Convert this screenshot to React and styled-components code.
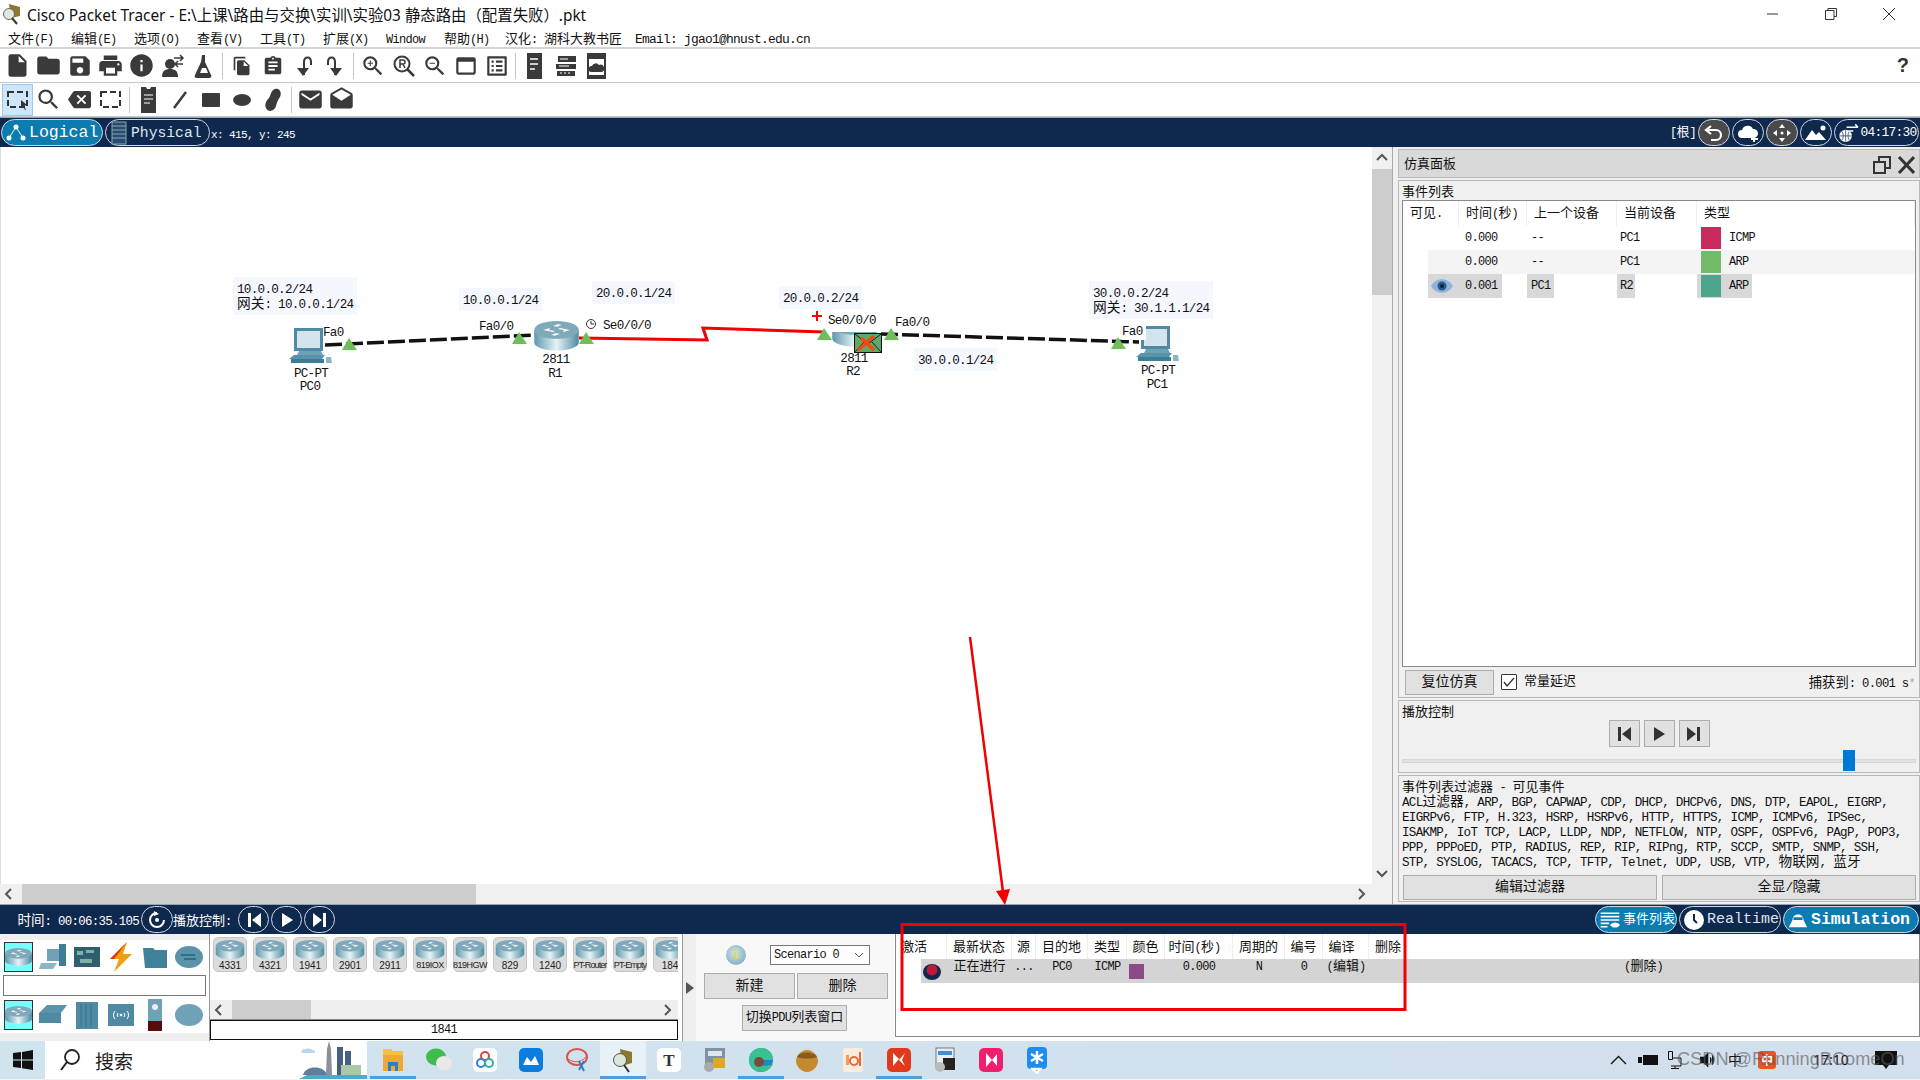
import styled, { createGlobalStyle } from 'styled-components';
import {
  MdInsertDriveFile,
  MdFolder,
  MdSave,
  MdPrint,
  MdInfo,
  MdZoomIn,
  MdZoomOut,
  MdSearch,
  MdBackspace,
  MdEmail,
  MdDrafts,
  MdFileCopy,
  MdAssignment,
  MdWebAsset,
  MdListAlt,
} from 'react-icons/md';

const GlobalStyle = createGlobalStyle`
  html, body { margin: 0; padding: 0; background: #fff; }
  * { box-sizing: border-box; }
`;

const MonoSpan = styled.span`
  font-family: 'Liberation Mono', 'Noto Sans CJK SC', monospace;
  font-size: ${p => p.$s * 0.92}px;
  letter-spacing: ${p => p.$s * -0.052}px;
  white-space: pre;
`;

const Han = styled.span`
  font-family: 'Noto Sans CJK SC', sans-serif;
  font-size: ${p => p.$s}px;
  letter-spacing: 0;
  line-height: 0;
`;

// SimSun look: half width latin next to full width han
function Txt({ s = 13, children }) {
  const parts = String(children).split(/([\u3000-\u9fff\uff00-\uffef]+)/);
  return (
    <MonoSpan $s={s}>
      {parts.map((part, i) =>
        i % 2 ? (
          <Han key={i} $s={s}>
            {part}
          </Han>
        ) : (
          part
        )
      )}
    </MonoSpan>
  );
}

const Page = styled.div`
  position: relative;
  width: 1920px;
  height: 1080px;
  overflow: hidden;
  display: flex;
  flex-direction: column;
  background: #f0f0f0;
  color: #111;
`;

const TitleBar = styled.div`
  height: 28px;
  background: #fff;
  display: flex;
  align-items: center;
  padding: 0 4px 0 2px;
  font-family: 'Noto Sans', 'Noto Sans CJK SC', sans-serif;
  font-size: 15.400px;
  gap: 3px;
`;

const TitleText = styled.span`
  flex: 1;
  white-space: pre;
  margin-left: 2px;
`;

const WinButton = styled.div`
  width: 55px;
  height: 28px;
  display: flex;
  align-items: center;
  justify-content: center;
`;

const MenuBar = styled.div`
  height: 19px;
  background: #fff;
  display: flex;
  align-items: center;
  padding-left: 8px;
`;

const MenuItem = styled.div`
  width: ${p => p.$w || 63}px;
  flex-shrink: 0;
  white-space: nowrap;
`;

const Toolbar = styled.div`
  height: ${p => p.$h}px;
  background: #fff;
  border-top: ${p => (p.$top ? '2px solid #d4d4d4' : 'none')};
  border-bottom: 1px solid #c8c8c8;
  display: flex;
  align-items: center;
  padding-left: 2px;
  color: #3a3a3a;
`;

const ToolSlot = styled.div`
  width: 31px;
  height: 32px;
  flex-shrink: 0;
  display: flex;
  align-items: center;
  justify-content: center;
  background: ${p => (p.$on ? '#cfe6f8' : 'transparent')};
  border: ${p => (p.$on ? '1px solid #99c8ee' : 'none')};
`;

const ToolSep = styled.div`
  width: 1px;
  height: 26px;
  background: #c4c4c4;
  margin: 0 3px;
  flex-shrink: 0;
`;

const HelpMark = styled.div`
  margin-left: auto;
  margin-right: 11px;
  font: bold 20px 'Liberation Sans', sans-serif;
  color: #333;
`;

const NavBar = styled.div`
  height: ${p => p.$h}px;
  background: #0f294e;
  color: #fff;
  display: flex;
  align-items: center;
  border-top: 1px solid #9aa3ad;
  padding: 0 1px;
  gap: 2px;
  flex-shrink: 0;
`;

const Pill = styled.div`
  height: 27px;
  width: ${p => p.$w}px;
  flex-shrink: 0;
  border: 1px solid #cfd8e6;
  border-radius: 14px;
  background: ${p => (p.$on ? '#0b7bb0' : '#0f294e')};
  display: flex;
  align-items: center;
  padding-left: 3px;
  gap: 2px;
  color: ${p => (p.$dim ? '#dfe6ef' : '#fff')};
  font-family: 'Liberation Mono', monospace;
  font-size: ${p => p.$fs || 15}px;
  font-weight: ${p => (p.$b ? 700 : 400)};
`;

const CircleBtn = styled.div`
  width: ${p => p.$w || 32}px;
  height: 27px;
  flex-shrink: 0;
  border: 1px solid #cfd8e6;
  border-radius: 14px;
  background: ${p => (p.$on ? '#4a4a4a' : '#0f294e')};
  display: flex;
  align-items: center;
  justify-content: center;
  gap: 1px;
  color: #fff;
`;

const Coords = styled.div`
  margin-left: -1px;
  color: #fff;
`;

const TimeLabel = styled.div`
  margin-left: 3px;
`;

const PlayLabel = styled.div`
  margin: 0 5px 0 -2px;
`;

const Spacer = styled.div`
  flex: 1;
`;

const Main = styled.div`
  height: 757px;
  display: flex;
  flex-shrink: 0;
`;

const CanvasColumn = styled.div`
  width: 1393px;
  display: flex;
  border-right: 1px solid #aaa;
  flex-shrink: 0;
`;

const CanvasWrap = styled.div`
  flex: 1;
  display: flex;
  flex-direction: column;
`;

const Canvas = styled.div`
  position: relative;
  flex: 1;
  background: #fff;
  overflow: hidden;
  border-left: 1px solid #ddd;
`;

const LinkLayer = styled.svg`
  position: absolute;
  left: 0;
  top: 0;
`;

const Note = styled.div`
  position: absolute;
  left: ${p => p.$x}px;
  top: ${p => p.$y - 148}px;
  padding: 6px 4px 2px;
  background: #f5f7ff;
  font: 12.600px/15px 'Liberation Mono', monospace;
  white-space: pre;
  color: #111;
`;

const PortLabel = styled.div`
  position: absolute;
  left: ${p => p.$x}px;
  top: ${p => p.$y - 148 - 8}px;
  line-height: 16px;
  background: ${p => (p.$bg ? '#fff' : 'transparent')};
  padding-right: ${p => (p.$bg ? 3 : 0)}px;
`;

const NodeCaption = styled.div`
  position: absolute;
  left: ${p => p.$x - 40}px;
  top: ${p => p.$y - 148 - 7}px;
  width: 80px;
  text-align: center;
  line-height: 14px;
`;

const NodeIcon = styled.div`
  position: absolute;
  left: ${p => p.$x}px;
  top: ${p => p.$y - 148}px;
  line-height: 0;
  clip-path: ${p => (p.$crop ? `inset(${p.$crop}px 0 0 0)` : 'none')};
`;

const HScroll = styled.div`
  height: 20px;
  background: #f0f0f0;
  display: flex;
  align-items: center;
  flex-shrink: 0;
`;

const ScrollArrow = styled.div`
  width: 20px;
  flex-shrink: 0;
  display: flex;
  justify-content: center;
  align-items: center;
  color: #555;
`;

const HTrack = styled.div`
  flex: 1;
  height: 100%;
`;

const HThumb = styled.div`
  margin-left: 2px;
  width: 454px;
  height: 100%;
  background: #cdcdcd;
`;

const VScroll = styled.div`
  width: 20px;
  background: #f0f0f0;
  display: flex;
  flex-direction: column;
  flex-shrink: 0;
  padding-bottom: 20px;
`;

const VArrow = styled.div`
  height: 22px;
  display: flex;
  align-items: center;
  justify-content: center;
`;

const VTrack = styled.div`
  flex: 1;
`;

const VThumb = styled.div`
  height: 126px;
  background: #cdcdcd;
`;

const SidePanel = styled.div`
  flex: 1;
  display: flex;
  flex-direction: column;
  padding: 2px 0 1px 5px;
  gap: 2px;
`;

const PanelHeader = styled.div`
  height: 29px;
  background: #d9d9d9;
  border: 1px solid #bbb;
  display: flex;
  align-items: center;
  padding: 2px 4px 0 5px;
  flex-shrink: 0;
`;

const Section = styled.div`
  border: 1px solid #b8b8b8;
  padding: 3px;
  flex-shrink: 0;
  height: ${p => p.$h}px;
  display: flex;
  flex-direction: column;
  position: relative;
`;

const SectionTitle = styled.div`
  line-height: 14px;
  height: 15px;
  flex-shrink: 0;
  margin-bottom: ${p => p.$mb || 0}px;
`;

const EventBox = styled.div`
  height: 467px;
  background: #fff;
  border: 1px solid #8a8a8a;
  flex-shrink: 0;
`;

const EVENT_COLS = '56px 68px 90px 80px 1fr';

const EventHead = styled.div`
  display: grid;
  grid-template-columns: ${EVENT_COLS};
  height: 25px;
  align-items: center;
`;

const HeadCell = styled.div`
  height: 100%;
  display: flex;
  align-items: center;
  padding-left: 7px;
  border-right: 1px solid #efefef;
`;

const EventRow = styled.div`
  display: grid;
  grid-template-columns: 31px 68px 90px 80px 1fr;
  height: 24px;
  margin-left: 25px;
  align-items: center;
  background: ${p => (p.$alt ? '#f4f4f4' : 'transparent')};
`;

const EventCell = styled.div`
  height: 24px;
  display: flex;
  align-items: center;
  gap: 8px;
  padding-left: ${p => p.$pl || 3}px;
  padding-right: ${p => p.$pr || 0}px;
  width: ${p => (p.$full ? 'auto' : 'fit-content')};
  background: ${p => (p.$sel ? '#d8d8d8' : 'transparent')};
`;

const Swatch = styled.div`
  width: 20px;
  height: 22px;
  background: ${p => p.$c};
`;

const EventControls = styled.div`
  height: 24px;
  margin-top: 3px;
  margin-left: 3px;
  display: flex;
  align-items: center;
  gap: 7px;
`;

const GreyButton = styled.div`
  width: ${p => (p.$w ? `${p.$w}px` : 'auto')};
  height: ${p => p.$h || 25}px;
  flex: ${p => (p.$w ? '0 0 auto' : 1)};
  background: #e1e1e1;
  border: 1px solid #adadad;
  display: flex;
  align-items: center;
  justify-content: center;
  color: #111;
`;

const CheckBox = styled.div`
  width: 16px;
  height: 16px;
  border: 1px solid #333;
  background: #fff;
  display: flex;
  align-items: center;
  justify-content: center;
  border-radius: 1px;
`;

const CaptureText = styled.div`
  margin-left: auto;
  margin-right: 1px;
`;

const Faint = styled.span`
  color: #aaa;
`;

const PlayRow = styled.div`
  display: flex;
  justify-content: center;
  gap: 4px;
  margin-top: 1px;
`;

const PlayBtn = styled(GreyButton)`
  width: 31px;
  height: 27px;
  flex: 0 0 auto;
`;

const Slider = styled.div`
  position: relative;
  height: 4px;
  background: #e0e4e0;
  border: 1px solid #d6d6d6;
  margin-top: 12px;
`;

const SliderThumb = styled.div`
  position: absolute;
  left: 440px;
  top: -10px;
  width: 12px;
  height: 21px;
  background: #0078d7;
`;

const FilterLine = styled.div`
  font: 12.600px/15px 'Liberation Mono', monospace;
  height: 15px;
  white-space: pre;
`;

const FilterButtons = styled.div`
  display: flex;
  gap: 5px;
  margin-top: 4px;
  padding: 0 0 0 1px;
`;

const BottomPanel = styled.div`
  height: 107px;
  display: flex;
  background: #fff;
  flex-shrink: 0;
`;

const DevicePicker = styled.div`
  width: 210px;
  display: flex;
  flex-direction: column;
  flex-shrink: 0;
  border-right: 1px solid #999;
`;

const GreyBand = styled.div`
  height: ${p => p.$h}px;
  background: #efefef;
  flex-shrink: 0;
`;

const IconRow = styled.div`
  height: 31px;
  padding: 0 4px;
  display: flex;
  gap: 5px;
  margin: ${p => p.$m || '0'};
  flex-shrink: 0;
`;

const PickIcon = styled.div`
  width: 29px;
  height: 30px;
  display: flex;
  align-items: center;
  justify-content: center;
  background: ${p => (p.$on ? '#7ff' : 'transparent')};
  border: ${p => (p.$on ? '1px solid #333' : 'none')};
`;

const PickerInput = styled.div`
  height: 24px;
  margin: 2px 3px;
  border: 1px solid #777;
  background: #fff;
`;

const DeviceColumn = styled.div`
  width: 468px;
  display: flex;
  flex-direction: column;
  flex-shrink: 0;
`;

const TileStrip = styled.div`
  height: 66px;
  display: flex;
  gap: 6px;
  padding: 3px 0 0 3px;
  overflow: hidden;
  flex-shrink: 0;
`;

const Tile = styled.div`
  width: 34px;
  height: 35px;
  flex-shrink: 0;
  background: #dcdcdc;
  border: 1px solid #c4c4c4;
  border-radius: 5px;
  display: flex;
  flex-direction: column;
  align-items: center;
  line-height: 11px;
  padding-top: 2px;
  white-space: nowrap;
`;

const TileLabel = styled.div`
  font-family: 'Liberation Sans Narrow', 'Liberation Sans', sans-serif;
  font-size: ${p => (p.$n > 5 ? 9 : 10)}px;
  color: #222;
  margin-top: 1px;
  letter-spacing: ${p => (p.$n > 7 ? -0.9 : p.$n > 5 ? -0.5 : 0)}px;
`;

const TileScroll = styled.div`
  height: 20px;
  background: #efefef;
  display: flex;
  align-items: center;
  justify-content: space-between;
  border-bottom: 1px solid #888;
  flex-shrink: 0;
`;

const TileThumb = styled.div`
  width: 79px;
  height: 100%;
  background: #cdcdcd;
  margin-left: 2px;
`;

const SelectedDevice = styled.div`
  height: 20px;
  border: 1.5px solid #111;
  background: #fff;
  display: flex;
  align-items: center;
  justify-content: center;
`;

const CollapseStrip = styled.div`
  width: 18px;
  flex-shrink: 0;
  display: flex;
  align-items: center;
  justify-content: flex-end;
  background: #fff;
`;

const CollapseInner = styled.div`
  width: 14px;
  height: 100%;
  background: #efefef;
  border-left: 1px solid #999;
  display: flex;
  align-items: center;
  justify-content: center;
`;

const ScenarioPanel = styled.div`
  width: 198px;
  flex-shrink: 0;
  display: flex;
  flex-direction: column;
  padding: 11px 6px 0 8px;
  background: #f8f8f8;
`;

const ScenarioTop = styled.div`
  display: flex;
  align-items: center;
  height: 20px;
  margin-bottom: 8px;
`;

const InfoDot = styled.div`
  width: 20px;
  height: 20px;
  margin-left: 22px;
  margin-right: 24px;
  border-radius: 50%;
  background: radial-gradient(circle at 45% 40%, #cfe4ec, #6f9fb3);
  display: flex;
  align-items: center;
  justify-content: center;
  font: bold 14px 'Liberation Serif', serif;
  color: #e8e020;
`;

const ScenarioSelect = styled.div`
  width: 100px;
  height: 20px;
  background: #fff;
  border: 1px solid #777;
  display: flex;
  align-items: center;
  justify-content: space-between;
  padding: 0 5px 0 3px;
`;

const ButtonRow = styled.div`
  display: flex;
  gap: 2px;
`;

const ToggleWrap = styled.div`
  display: flex;
  justify-content: flex-start;
  padding-left: 38px;
  margin-top: 6px;
`;

const PduTable = styled.div`
  flex: 1;
  margin: 0 0 4px 1px;
  border: 1px solid #888;
  border-top: none;
  background: #fff;
`;

const PDU_COLS = '51px 65px 24px 52px 39px 38px 68px 52px 38px 46px 39px 1fr';

const PduHead = styled.div`
  display: grid;
  grid-template-columns: ${PDU_COLS};
  height: 25px;
`;

const PduHeadCell = styled.div`
  border-right: 1px solid #efefef;
  display: flex;
  align-items: center;
  justify-content: ${p => (p.$left ? 'flex-start' : 'center')};
  padding-top: 3px;
  padding-left: ${p => (p.$left ? 5 : 0)}px;
  padding-right: ${p => (p.$shift ? 8 : 0)}px;
  white-space: nowrap;
`;

const PduRow = styled.div`
  display: grid;
  grid-template-columns: ${PDU_COLS};
  height: 24px;
  background: linear-gradient(to right, #fff 25px, #d4d4d4 25px);
`;

const PduCell = styled.div`
  display: flex;
  justify-content: ${p => (p.$start ? 'flex-start' : 'center')};
  align-items: flex-start;
  line-height: 16px;
  position: relative;
  white-space: nowrap;
  padding-right: ${p => p.$pr || 0}px;
`;

const PduDot = styled.div`
  width: 18px;
  height: 16px;
  border-radius: 50%;
  margin: 5px 0 0 27px;
  background: radial-gradient(circle at 50% 38%, #c0183a 0 38%, #14284a 42%);
`;

const PduSwatch = styled.div`
  width: 15px;
  height: 15px;
  margin: 5px 0 0 2px;
  background: #8c4a87;
`;

const Taskbar = styled.div`
  position: relative;
  height: 38px;
  background: linear-gradient(to right, #d0e4ee, #d2dfec);
  display: flex;
  align-items: stretch;
  flex-shrink: 0;
`;

const StartBtn = styled.div`
  width: 45px;
  display: flex;
  align-items: center;
  justify-content: center;
  flex-shrink: 0;
`;

const SearchBox = styled.div`
  width: 322px;
  background: #fff;
  flex-shrink: 0;
  display: flex;
  align-items: center;
  padding-left: 14px;
  gap: 14px;
  font: 19px 'Noto Sans CJK SC', sans-serif;
  color: #222;
  overflow: hidden;
`;

const SearchArt = styled.div`
  margin-left: auto;
  line-height: 0;
`;

const TaskIcons = styled.div`
  display: flex;
  margin-left: 3px;
`;

const TaskSlot = styled.div`
  width: 46px;
  display: flex;
  align-items: center;
  justify-content: center;
  position: relative;
  background: ${p => (p.$cur ? '#e8f1f6' : 'transparent')};
  border-bottom: 3px solid ${p => (p.$on ? '#4a9fe0' : 'transparent')};
  border-top: 3px solid transparent;
`;

const Tray = styled.div`
  position: relative;
  margin-left: auto;
  width: 310px;
  display: flex;
  align-items: center;
  color: #111;
  font: 14px 'Noto Sans', 'Noto Sans CJK SC', sans-serif;
`;

const TrayItem = styled.div`
  margin-left: ${p => p.$ml}px;
  line-height: 0;
  display: flex;
  align-items: center;
`;

const TrayText = styled.span`
  line-height: 18px;
`;

const OrangeBadge = styled.div`
  width: 18px;
  height: 18px;
  background: #e8531f;
  border-radius: 3px;
  color: #fff;
  font: bold 12px 'Noto Sans CJK SC', sans-serif;
  line-height: 18px;
  text-align: center;
`;

const Watermark = styled.div`
  position: absolute;
  left: 67px;
  top: 8px;
  font: 18.200px 'Liberation Sans', sans-serif;
  color: rgba(90, 90, 90, 0.65);
  white-space: nowrap;
`;

const Annotation = styled.svg`
  position: absolute;
  left: 0;
  top: 0;
  pointer-events: none;
`;

function RouterIcon({ w = 45, id = 'r' }) {
  const h = w * 0.66;
  return (
    <svg width={w} height={h} viewBox="0 0 45 30">
      <defs>
        <linearGradient id={id} x1="0" x2="1" y1="0" y2="0">
          <stop offset="0" stopColor="#5f97ad" />
          <stop offset="0.5" stopColor="#e6f3f6" />
          <stop offset="1" stopColor="#4f8aa2" />
        </linearGradient>
      </defs>
      <path d="M0 9v13c0 4 10 8 22.500 8S45 26 45 22V9z" fill={`url(#${id})`} />
      <ellipse cx="22.500" cy="9" rx="22.500" ry="9" fill="#7fa9ba" />
      <path
        d="M9 9l7-2-1 2 6 1-2 1-5-1zM36 9l-7 2 1-2-6-1 2-1 5 1zM19 5l5-2 4 1-4 1 1 1zM26 13l-5 2-4-1 4-1-1-1z"
        fill="#fff"
      />
    </svg>
  );
}

function PcIcon() {
  return (
    <svg width="44" height="37" viewBox="0 0 44 37">
      <path d="M5 0h29v23H5z" fill="#4e8ba3" />
      <path d="M8 3h23v17H8z" fill="#d3e4ec" />
      <path d="M10 23h22l2 4H8z" fill="#6fa2b6" />
      <path d="M5 27h31l-3 4H0z" fill="#5b93aa" />
      <path d="M2 31h33v4H2z" fill="#3f7d96" />
      <path d="M37 29h5l1 6h-6z" fill="#8db6c5" />
    </svg>
  );
}

const Tri = ({ x, y }) => <path d={`M${x} ${y - 12}l8 12h-15z`} fill="#6fbe5c" />;

function TopologyLinks() {
  const yy = v => v - 148;
  return (
    <LinkLayer width="1372" height="737">
      <line x1="324" y1={yy(346)} x2="534" y2={yy(336)} stroke="#111" strokeWidth="3.500" strokeDasharray="17 4" />
      <polyline
        points={`578,${yy(339)} 706,${yy(341)} 702,${yy(329)} 824,${yy(333)}`}
        fill="none"
        stroke="#f00000"
        strokeWidth="3"
      />
      <line x1="880" y1={yy(335)} x2="1138" y2={yy(343)} stroke="#111" strokeWidth="3.500" strokeDasharray="17 4" />
      <Tri x={348} y={yy(351)} />
      <Tri x={518} y={yy(345)} />
      <Tri x={585} y={yy(345)} />
      <path d={`M811 ${yy(317)}h10M816 ${yy(312)}v10`} stroke="#f00" strokeWidth="2" />
      <circle cx="590" cy={yy(325)} r="4.500" fill="none" stroke="#333" />
      <path d={`M590 ${yy(322)}v3h3`} fill="none" stroke="#333" />
    </LinkLayer>
  );
}

// these two sit on top of R2 and the PC1 link
function FrontMarkers() {
  const yy = v => v - 148;
  return (
    <LinkLayer width="1372" height="737">
      <Tri x={823} y={yy(341)} />
      <Tri x={890} y={yy(341)} />
      <Tri x={1117} y={yy(350)} />
    </LinkLayer>
  );
}

function Envelope() {
  return (
    <svg width="28" height="20" viewBox="0 0 28 20">
      <rect x="0.500" y="0.500" width="27" height="19" fill="#5fa868" stroke="#111" />
      <path d="M1 1l13 10L27 1M1 19l9-10M27 19l-9-10" fill="none" stroke="#123" />
      <path d="M4 17L20 3M7 5l13 12" stroke="#f04a10" strokeWidth="3.500" />
    </svg>
  );
}

const Flask = () => (
  <svg width="22" height="24" viewBox="0 0 22 24">
    <path d="M9 1h3v7l6 13c1 2 0 3-2 3H4c-2 0-3-1-2-3L8 8z" fill="currentColor" />
    <path d="M9 14h4l2 5H7z" fill="#fff" />
  </svg>
);

const UserArrows = () => (
  <svg width="24" height="24" viewBox="0 0 24 24">
    <circle cx="9" cy="10" r="5" fill="currentColor" />
    <path d="M1 23c0-6 3-8 8-8s8 2 8 8z" fill="currentColor" />
    <path d="M13 4h9M19 1l3 3-3 3M22 10h-8M17 7l-3 3 3 3" stroke="currentColor" fill="none" strokeWidth="1.500" />
  </svg>
);

const CurveArrow = ({ flip }) => (
  <svg width="16" height="24" viewBox="0 0 16 24" style={flip ? { transform: 'scaleX(-1)' } : undefined}>
    <path d="M8 21V8c0-6 7-6 7 0v3" fill="none" stroke="currentColor" strokeWidth="2" />
    <path d="M2 14h12l-6 8z" fill="currentColor" transform="translate(-1 0)" />
  </svg>
);

const ZoomR = () => (
  <svg width="24" height="24" viewBox="0 0 24 24">
    <circle cx="10" cy="10" r="7.500" fill="none" stroke="currentColor" strokeWidth="2" />
    <path d="M15 15l7 7" stroke="currentColor" strokeWidth="2.500" />
    <path d="M8 14V6h3a2 2 0 010 4H8M11 10l2 4" fill="none" stroke="currentColor" strokeWidth="1.500" />
  </svg>
);

const ServerIcon = () => (
  <svg width="16" height="26" viewBox="0 0 16 26">
    <rect width="15" height="26" fill="currentColor" />
    <path d="M3 6h8M3 11h8M3 16h5" stroke="#fff" strokeWidth="1.500" />
  </svg>
);

const RackIcon = () => (
  <svg width="22" height="22" viewBox="0 0 22 22">
    <path d="M3 1h18v6H3z" fill="currentColor" />
    <path d="M1 9h20v5H1zM2 16h18v5H2z" fill="currentColor" />
    <path d="M5 4h8M4 11h10M5 18h2M9 18h2M13 18h2" stroke="#fff" />
  </svg>
);

const CloudPic = () => (
  <svg width="20" height="26" viewBox="0 0 20 26">
    <rect width="19" height="26" fill="currentColor" />
    <rect x="2" y="6" width="15" height="16" fill="#fff" />
    <path d="M4 19a3 3 0 011-6 4 4 0 017-1 3 3 0 013 7z" fill="currentColor" />
  </svg>
);

const SelectIcon = ({ arrow = true }) => (
  <svg width="24" height="22" viewBox="0 0 24 22">
    <rect x="2" y="3" width="19" height="15" fill="none" stroke="#333" strokeWidth="2" strokeDasharray="6 3" />
    {arrow && <path d="M15 11l6 5-3 1 2 4-1 0-2-4-2 2z" fill="#333" />}
  </svg>
);

const NoteIcon = () => (
  <svg width="15" height="26" viewBox="0 0 15 26">
    <path d="M0 0h5l1 2h3l1-2h5v26H0z" fill="currentColor" />
    <path d="M3 8h9M3 12h9M3 16h6" stroke="#fff" strokeWidth="1.200" />
  </svg>
);

const LineIcon = () => (
  <svg width="16" height="20" viewBox="0 0 16 20">
    <path d="M2 18L14 2" stroke="currentColor" strokeWidth="2.500" />
  </svg>
);

const RectIcon = () => (
  <svg width="18" height="14" viewBox="0 0 18 14">
    <rect width="18" height="14" rx="1" fill="currentColor" />
  </svg>
);

const EllipseIcon = () => (
  <svg width="18" height="12" viewBox="0 0 18 12">
    <ellipse cx="9" cy="6" rx="9" ry="6" fill="currentColor" />
  </svg>
);

const BlobIcon = () => (
  <svg width="18" height="24" viewBox="0 0 18 24">
    <path d="M11 1c5-1 7 4 5 8-2 3-3 5-4 9-1 5-8 7-10 2-2-4 1-8 3-10 2-3 2-8 6-9z" fill="currentColor" />
  </svg>
);

const toolbarOne = [
  <MdInsertDriveFile size={27} />,
  <MdFolder size={27} />,
  <MdSave size={26} />,
  <MdPrint size={27} />,
  <MdInfo size={27} />,
  <UserArrows />,
  <Flask />,
  null,
  <MdFileCopy size={20} />,
  <MdAssignment size={22} />,
  <CurveArrow />,
  <CurveArrow flip />,
  null,
  <MdZoomIn size={26} />,
  <ZoomR />,
  <MdZoomOut size={26} />,
  <MdWebAsset size={26} />,
  <MdListAlt size={26} />,
  null,
  <ServerIcon />,
  <RackIcon />,
  <CloudPic />,
];

const toolbarTwo = [
  <SelectIcon />,
  <MdSearch size={27} />,
  <MdBackspace size={23} />,
  <SelectIcon arrow={false} />,
  null,
  <NoteIcon />,
  <LineIcon />,
  <RectIcon />,
  <EllipseIcon />,
  <BlobIcon />,
  null,
  <MdEmail size={27} />,
  <MdDrafts size={27} />,
];

const menus = [
  ['文件(F)'],
  ['编辑(E)'],
  ['选项(O)'],
  ['查看(V)'],
  ['工具(T)'],
  ['扩展(X)'],
  ['Window', 58],
  ['帮助(H)', 61],
  ['汉化: 湖科大教书匠', 130],
  ['Email: jgao1@hnust.edu.cn', 200, 14],
];

const events = [
  { eye: false, time: '0.000', prev: '--', cur: 'PC1', color: '#c92a5e', type: 'ICMP' },
  { eye: false, time: '0.000', prev: '--', cur: 'PC1', color: '#72b968', type: 'ARP', alt: true },
  { eye: true, time: '0.001', prev: 'PC1', cur: 'R2', color: '#4fa58c', type: 'ARP', sel: true },
];

const filterLines = [
  'ACL过滤器, ARP, BGP, CAPWAP, CDP, DHCP, DHCPv6, DNS, DTP, EAPOL, EIGRP,',
  'EIGRPv6, FTP, H.323, HSRP, HSRPv6, HTTP, HTTPS, ICMP, ICMPv6, IPSec,',
  'ISAKMP, IoT TCP, LACP, LLDP, NDP, NETFLOW, NTP, OSPF, OSPFv6, PAgP, POP3,',
  'PPP, PPPoED, PTP, RADIUS, REP, RIP, RIPng, RTP, SCCP, SMTP, SNMP, SSH,',
  'STP, SYSLOG, TACACS, TCP, TFTP, Telnet, UDP, USB, VTP, 物联网, 蓝牙',
];

const tiles = ['4331', '4321', '1941', '2901', '2911', '819IOX', '819HGW', '829', '1240', 'PT-Router', 'PT-Empty', '184'];

const pduHeads = ['激活', '最新状态', '源', '目的地', '类型', '颜色', '时间(秒)', '周期的', '编号', '编译', '删除'];

const SkipBack = ({ c = '#fff', s = 16 }) => (
  <svg width={s} height={s} viewBox="0 0 16 16">
    <path d="M2 1h3v14H2zM15 1v14L6 8z" fill={c} />
  </svg>
);
const PlayIcon = ({ c = '#fff', s = 16 }) => (
  <svg width={s} height={s} viewBox="0 0 16 16">
    <path d="M3 1l11 7-11 7z" fill={c} />
  </svg>
);
const SkipFwd = ({ c = '#fff', s = 16 }) => (
  <svg width={s} height={s} viewBox="0 0 16 16">
    <path d="M11 1h3v14h-3zM1 1v14l9-7z" fill={c} />
  </svg>
);

const Chevron = ({ dir = 'left', c = '#555' }) => {
  const d = { left: 'M8 2L3 7l5 5', right: 'M4 2l5 5-5 5', up: 'M2 9l5-5 5 5', down: 'M2 5l5 5 5-5' }[dir];
  return (
    <svg width="14" height="14" viewBox="0 0 14 14">
      <path d={d} fill="none" stroke={c} strokeWidth="2" />
    </svg>
  );
};

const pickTop = [
  <RouterIcon w={27} id="pa" />,
  <svg width="28" height="28" viewBox="0 0 28 28"><path d="M8 6h12v12H8z" fill="#6fa2b6" /><path d="M20 1h7v22h-7z" fill="#3f7d96" /><path d="M2 20h16l-4 6H0z" fill="#8db6c5" /></svg>,
  <svg width="26" height="26" viewBox="0 0 26 26"><rect y="3" width="26" height="20" fill="#2f5f6e" /><path d="M3 7h6v4H3zM12 6h8v3h-8zM6 15h12v4H6z" fill="#7fb0a8" /></svg>,
  <svg width="26" height="30" viewBox="0 0 26 30"><path d="M19 0L2 17h9L6 30l18-18h-9z" fill="#f0a010" /><path d="M19 0L2 17h4z" fill="#e03010" /></svg>,
  <svg width="26" height="26" viewBox="0 0 26 26"><path d="M1 4h10l2 2h12v18H3z" fill="#3f8299" /></svg>,
  <svg width="28" height="22" viewBox="0 0 28 22"><ellipse cx="14" cy="11" rx="14" ry="11" fill="#5b93aa" /><path d="M6 9h14M9 13h12" stroke="#2f6f88" strokeWidth="2" /></svg>,
];

const pickBottom = [
  <RouterIcon w={27} id="pb" />,
  <svg width="28" height="20" viewBox="0 0 28 20"><path d="M8 0h20l-6 8v10H0V8z" fill="#5b93aa" /><path d="M0 8h22v10H0z" fill="#4e8ba3" /></svg>,
  <svg width="22" height="27" viewBox="0 0 22 27"><rect width="22" height="27" fill="#4e8ba3" /><path d="M5 2v23M10 2v23M15 2v23" stroke="#37708a" /></svg>,
  <svg width="26" height="22" viewBox="0 0 26 22"><rect width="26" height="22" fill="#4e8ba3" /><path d="M7 7a6 6 0 000 8M19 7a6 6 0 010 8M10 9a3 3 0 000 4M16 9a3 3 0 010 4" stroke="#fff" fill="none" /><circle cx="13" cy="11" r="1.300" fill="#fff" /></svg>,
  <svg width="14" height="32" viewBox="0 0 14 32"><rect width="14" height="22" fill="#6fa2b6" /><rect y="22" width="14" height="10" fill="#5a0a0a" /><circle cx="7" cy="8" r="3" fill="#eee" /></svg>,
  <svg width="28" height="22" viewBox="0 0 28 22"><ellipse cx="14" cy="11" rx="14" ry="11" fill="#6fa2b6" /></svg>,
];

const WinLogo = () => (
  <svg width="20" height="20" viewBox="0 0 20 20">
    <path d="M0 3l8-1v7.500H0zM9 2l11-2v9.500H9zM0 10.500h8V18l-8-1zM9 10.500h11V20L9 18.300z" fill="#111" />
  </svg>
);

const SkylineArt = () => (
  <svg width="68" height="38" viewBox="0 0 68 38">
    <path d="M0 38l8-4h60v4z" fill="#4fa9c9" />
    <path d="M4 34c2-10 22-10 24 0z" fill="#5f7f99" />
    <path d="M28 8l2-8 2 8 1 26h-6z" fill="#8a8f99" />
    <path d="M38 6h6v28h-6zM46 10h6v24h-6z" fill="#46607f" />
    <path d="M42 24h20v10H42z" fill="#a8c8a8" />
    <path d="M2 10c4-3 8-3 12-1 3 1 3 3 0 3H3z" fill="#b5d8ea" />
  </svg>
);

const square = (bg, inner) => (
  <svg width="26" height="26" viewBox="0 0 26 26">
    <rect x="1" y="1" width="24" height="24" rx="5" fill={bg} />
    {inner}
  </svg>
);

const taskIcons = [
  { on: true, icon: <svg width="22" height="24" viewBox="0 0 22 24"><path d="M1 1h8l2 2h10v8H1z" fill="#f5c33b" /><path d="M1 7h20v16H1z" fill="#f2a72e" /><path d="M6 14h10v9h-3v-5H9v5H6z" fill="#2a7fc9" /></svg> },
  { icon: <svg width="26" height="24" viewBox="0 0 26 24"><ellipse cx="10" cy="9" rx="10" ry="8.500" fill="#3ebd4e" /><ellipse cx="18" cy="15" rx="8" ry="7" fill="#e9e9e9" /></svg> },
  { icon: square('#fff', <g fill="none" strokeWidth="2"><circle cx="13" cy="9" r="4" stroke="#e0443c" /><circle cx="9" cy="16" r="4" stroke="#2f7fe0" /><circle cx="17" cy="16" r="4" stroke="#2fb0a0" /></g>) },
  { icon: square('#0b7de0', <path d="M5 18l4-8 4 5 4-6 4 9z" fill="#fff" />) },
  { icon: <svg width="26" height="26" viewBox="0 0 26 26"><ellipse cx="13" cy="10" rx="10" ry="8" fill="none" stroke="#d85050" strokeWidth="2" /><path d="M4 12c6 4 12 4 18-2" stroke="#d85050" fill="none" /><path d="M15 14l5 10M20 14l-5 9" stroke="#2f7fc0" strokeWidth="2" /></svg> },
  { cur: true, on: true, icon: <svg width="26" height="26" viewBox="0 0 26 26"><path d="M10 2l12 3v11l-10 3z" fill="#8a7a2a" /><circle cx="10" cy="13" r="6.500" fill="#d8e8d8" stroke="#555" /><path d="M14 18l5 7" stroke="#333" strokeWidth="2" /></svg> },
  { icon: square('#fff', <text x="13" y="19" fontSize="17" fontWeight="700" fontFamily="Liberation Serif" textAnchor="middle" fill="#333">T</text>) },
  { icon: <svg width="22" height="26" viewBox="0 0 22 26"><rect x="1" y="1" width="20" height="20" fill="#7f93a3" /><rect x="4" y="4" width="14" height="5" fill="#dfe6ea" /><rect x="9" y="11" width="12" height="10" fill="#e0a820" /><circle cx="5" cy="20" r="5" fill="#aaa" /></svg> },
  { on: true, icon: <svg width="26" height="26" viewBox="0 0 26 26"><circle cx="13" cy="13" r="12" fill="#1e88c9" /><path d="M13 1c8 0 12 6 12 12H10c0 4 6 8 15 4-3 6-8 8-12 8-7 0-12-6-12-12S6 1 13 1z" fill="#37c28f" /><circle cx="11" cy="15" r="5" fill="#7a4b3a" /></svg> },
  { icon: <svg width="24" height="26" viewBox="0 0 24 26"><path d="M12 3c7 0 11 7 11 11 0 5-5 11-11 11S1 19 1 14C1 10 5 3 12 3z" fill="#c58a2f" /><path d="M2 10c2-6 18-6 20 0-6 2-14 2-20 0z" fill="#8a5a1f" /></svg> },
  { icon: <svg width="20" height="24" viewBox="0 0 20 24"><rect width="20" height="24" rx="2" fill="#f6ece0" /><rect x="3" y="7" width="3" height="10" fill="#e9a060" /><circle cx="11" cy="13" r="4" fill="none" stroke="#e86a3a" strokeWidth="2" /><rect x="16" y="4" width="2" height="14" fill="#e86a3a" /></svg> },
  { on: true, icon: square('#e03a1a', <path d="M7 6l6 6-6 7zM19 6l-6 7 6 6-3-6z" fill="#fff" />) },
  { icon: <svg width="22" height="26" viewBox="0 0 22 26"><rect x="2" y="1" width="18" height="20" fill="#e8eef3" stroke="#777" /><rect x="4" y="4" width="14" height="4" fill="#3f8fdc" /><rect x="9" y="11" width="12" height="12" fill="#222" /><circle cx="6" cy="20" r="5" fill="#bbb" /></svg> },
  { icon: square('#f01f6e', <path d="M8 6v14l6-7zM14 13l5-6v12z" fill="#fff" />) },
  { icon: <svg width="24" height="28" viewBox="0 0 24 28"><rect x="2" y="1" width="20" height="22" rx="4" fill="#1c8cf0" /><path d="M8 23h7l-3 4zM12 5v13M6 8l12 7M18 8L6 15" stroke="#fff" strokeWidth="2.500" /></svg> },
];

const N = 13.700;

export default function App() {
  return (
    <>
      <GlobalStyle />
      <Page>
        <TitleBar>
          <svg width="20" height="22" viewBox="0 0 20 22">
            <path d="M7 1l11 3v9l-9 2z" fill="#8a7a2a" />
            <circle cx="7" cy="11" r="5.500" fill="#dfe9df" stroke="#666" />
            <path d="M10 15l5 6" stroke="#333" strokeWidth="2" />
          </svg>
          <TitleText>Cisco Packet Tracer - E:\上课\路由与交换\实训\实验03 静态路由（配置失败）.pkt</TitleText>
          <WinButton>
            <svg width="12" height="12"><path d="M0 6h11" stroke="#333" /></svg>
          </WinButton>
          <WinButton>
            <svg width="12" height="12"><path d="M.5 2.500h8.500v9H.5zM3 2.500V.5h8.500v8H9" fill="none" stroke="#333" /></svg>
          </WinButton>
          <WinButton>
            <svg width="12" height="12"><path d="M0 0l12 12M12 0L0 12" stroke="#333" /></svg>
          </WinButton>
        </TitleBar>
        <MenuBar>
          {menus.map(([label, w, s]) => (
            <MenuItem key={label} $w={w}>
              <Txt s={s || 13}>{label}</Txt>
            </MenuItem>
          ))}
        </MenuBar>
        <Toolbar $h={36} $top>
          {toolbarOne.map((icon, i) => (icon ? <ToolSlot key={i}>{icon}</ToolSlot> : <ToolSep key={i} />))}
          <HelpMark>?</HelpMark>
        </Toolbar>
        <Toolbar $h={34}>
          {toolbarTwo.map((icon, i) =>
            icon ? (
              <ToolSlot key={i} $on={i === 0}>
                {icon}
              </ToolSlot>
            ) : (
              <ToolSep key={i} />
            )
          )}
        </Toolbar>
        <NavBar $h={30}>
          <Pill $on $w={102} $fs={16.500}>
            <svg width="22" height="22" viewBox="0 0 22 22">
              <path d="M11 5L4 16M11 5l7 11" stroke="#dff" />
              <circle cx="11" cy="5" r="2.500" fill="#fff" />
              <circle cx="4" cy="16" r="2.500" fill="#fff" />
              <circle cx="18" cy="16" r="2.500" fill="#fff" />
            </svg>
            Logical
          </Pill>
          <Pill $w={105} $fs={14.700} $dim>
            <svg width="20" height="24" viewBox="0 0 20 24">
              <rect x="3" y="1" width="14" height="22" fill="#2a4a70" stroke="#8aa" />
              <path d="M3 5h14M3 9h14M3 13h14M3 17h14" stroke="#8aa" />
            </svg>
            Physical
          </Pill>
          <Coords>
            <Txt s={12}>x: 415, y: 245</Txt>
          </Coords>
          <Spacer />
          <Txt s={13}>[根]</Txt>
          <CircleBtn $on>
            <svg width="20" height="18" viewBox="0 0 20 18">
              <path d="M7 2L2 6l5 4M2 6h10a5 5 0 010 10H7" fill="none" stroke="#fff" strokeWidth="2.200" />
            </svg>
          </CircleBtn>
          <CircleBtn>
            <svg width="22" height="18" viewBox="0 0 22 18">
              <path d="M5 14a4 4 0 010-8 6 6 0 0111-1 4.500 4.500 0 011 9z" fill="#fff" />
              <path d="M17 11v7M14 15h7" stroke="#fff" strokeWidth="2" />
            </svg>
          </CircleBtn>
          <CircleBtn $on>
            <svg width="20" height="20" viewBox="0 0 20 20">
              <path d="M10 1l3 4H7zM10 19l3-4H7zM1 10l4-3v6zM19 10l-4-3v6z" fill="#fff" />
              <circle cx="10" cy="10" r="1.500" fill="#fff" />
            </svg>
          </CircleBtn>
          <CircleBtn>
            <svg width="22" height="16" viewBox="0 0 22 16">
              <path d="M0 15l7-10 4 5 3-3 7 8z" fill="#fff" />
              <circle cx="18" cy="3" r="2.500" fill="#fff" />
            </svg>
          </CircleBtn>
          <CircleBtn $w={85}>
            <svg width="23" height="22" viewBox="0 0 24 22">
              <circle cx="9" cy="14" r="6.500" fill="#fff" />
              <path d="M2.500 14h13M9 8v12M5 9c2 3 2 7 0 10M13 9c-2 3-2 7 0 10" stroke="#0f294e" strokeWidth=".7" fill="none" />
              <path d="M10 5h12M19 2l3 3M12 9h5" stroke="#fff" strokeWidth="1.500" fill="none" />
            </svg>
            <Txt s={14}>04:17:30</Txt>
          </CircleBtn>
        </NavBar>
        <Main>
          <CanvasColumn>
            <CanvasWrap>
              <Canvas>
                <TopologyLinks />
                <Note $x={232} $y={278}><Txt s={N}>{'10.0.0.2/24\n网关: 10.0.0.1/24'}</Txt></Note>
                <Note $x={458} $y={289}><Txt s={N}>10.0.0.1/24</Txt></Note>
                <Note $x={591} $y={282}><Txt s={N}>20.0.0.1/24</Txt></Note>
                <Note $x={778} $y={287}><Txt s={N}>20.0.0.2/24</Txt></Note>
                <Note $x={913} $y={349}><Txt s={N}>30.0.0.1/24</Txt></Note>
                <Note $x={1088} $y={282}><Txt s={N}>{'30.0.0.2/24\n网关: 30.1.1.1/24'}</Txt></Note>

                <NodeIcon $x={288} $y={329}><PcIcon /></NodeIcon>
                <PortLabel $x={322} $y={332} $bg><Txt s={N}>Fa0</Txt></PortLabel>
                <NodeCaption $x={310} $y={373}><Txt s={N}>PC-PT</Txt></NodeCaption>
                <NodeCaption $x={309} $y={386}><Txt s={N}>PC0</Txt></NodeCaption>

                <PortLabel $x={478} $y={326}><Txt s={N}>Fa0/0</Txt></PortLabel>
                <NodeIcon $x={533} $y={322}><RouterIcon id="r1" /></NodeIcon>
                <PortLabel $x={602} $y={325}><Txt s={N}>Se0/0/0</Txt></PortLabel>
                <NodeCaption $x={555} $y={359}><Txt s={N}>2811</Txt></NodeCaption>
                <NodeCaption $x={554} $y={373}><Txt s={N}>R1</Txt></NodeCaption>

                <PortLabel $x={827} $y={320}><Txt s={N}>Se0/0/0</Txt></PortLabel>
                <PortLabel $x={894} $y={322}><Txt s={N}>Fa0/0</Txt></PortLabel>
                <NodeIcon $x={831} $y={318} $crop={15}><RouterIcon id="r2" /></NodeIcon>
                <NodeIcon $x={853} $y={334}><Envelope /></NodeIcon>
                <NodeCaption $x={853} $y={358}><Txt s={N}>2811</Txt></NodeCaption>
                <NodeCaption $x={852} $y={371}><Txt s={N}>R2</Txt></NodeCaption>

                <NodeIcon $x={1135} $y={327}><PcIcon /></NodeIcon>
                <PortLabel $x={1121} $y={331} $bg><Txt s={N}>Fa0</Txt></PortLabel>
                <NodeCaption $x={1157} $y={370}><Txt s={N}>PC-PT</Txt></NodeCaption>
                <NodeCaption $x={1156} $y={384}><Txt s={N}>PC1</Txt></NodeCaption>
                <FrontMarkers />
              </Canvas>
              <HScroll>
                <ScrollArrow><Chevron dir="left" /></ScrollArrow>
                <HTrack><HThumb /></HTrack>
                <ScrollArrow><Chevron dir="right" /></ScrollArrow>
              </HScroll>
            </CanvasWrap>
            <VScroll>
              <VArrow><Chevron dir="up" /></VArrow>
              <VThumb />
              <VTrack />
              <VArrow><Chevron dir="down" /></VArrow>
            </VScroll>
          </CanvasColumn>
          <SidePanel>
            <PanelHeader>
              <Txt s={13}>仿真面板</Txt>
              <Spacer />
              <svg width="42" height="20" viewBox="0 0 42 20">
                <path d="M1 7h11v11H1zM6 7V2h11v11h-5" fill="none" stroke="#333" strokeWidth="2" />
                <path d="M26 2l15 16M41 2L26 18" stroke="#333" strokeWidth="3" />
              </svg>
            </PanelHeader>
            <Section $h={518}>
              <SectionTitle $mb={1}><Txt s={13}>事件列表</Txt></SectionTitle>
              <EventBox>
                <EventHead>
                  {['可见.', '时间(秒)', '上一个设备', '当前设备', '类型'].map(h => (
                    <HeadCell key={h}><Txt s={13}>{h}</Txt></HeadCell>
                  ))}
                </EventHead>
                {events.map((ev, i) => (
                  <EventRow key={i} $alt={ev.alt}>
                    <EventCell $full $sel={ev.sel}>
                      {ev.eye && (
                        <svg width="22" height="16" viewBox="0 0 22 16">
                          <path d="M0 8c5-9 17-9 22 0-5 9-17 9-22 0z" fill="#8fb4d8" />
                          <circle cx="11" cy="8" r="4.500" fill="#2c5a8c" />
                          <circle cx="11" cy="8" r="2" fill="#0d2238" />
                        </svg>
                      )}
                    </EventCell>
                    <EventCell $pl={6} $pr={4} $sel={ev.sel}><Txt s={13}>{ev.time}</Txt></EventCell>
                    <EventCell $pl={4} $pr={3} $sel={ev.sel}><Txt s={13}>{ev.prev}</Txt></EventCell>
                    <EventCell $pl={3} $pr={2} $sel={ev.sel}><Txt s={13}>{ev.cur}</Txt></EventCell>
                    <EventCell $pl={4} $pr={3} $sel={ev.sel}>
                      <Swatch $c={ev.color} />
                      <Txt s={13}>{ev.type}</Txt>
                    </EventCell>
                  </EventRow>
                ))}
              </EventBox>
              <EventControls>
                <GreyButton $w={89} $h={25}><Txt s={14}>复位仿真</Txt></GreyButton>
                <CheckBox>
                  <svg width="12" height="12" viewBox="0 0 12 12">
                    <path d="M1 6l3 4 7-8" fill="none" stroke="#333" strokeWidth="1.300" />
                  </svg>
                </CheckBox>
                <Txt s={13}>常量延迟</Txt>
                <CaptureText>
                  <Txt s={13.300}>捕获到: 0.001 s</Txt>
                  <Faint><Txt s={13}>*</Txt></Faint>
                </CaptureText>
              </EventControls>
            </Section>
            <Section $h={73}>
              <SectionTitle><Txt s={13}>播放控制</Txt></SectionTitle>
              <PlayRow>
                <PlayBtn><SkipBack c="#333" /></PlayBtn>
                <PlayBtn><PlayIcon c="#333" /></PlayBtn>
                <PlayBtn><SkipFwd c="#333" /></PlayBtn>
              </PlayRow>
              <Slider><SliderThumb /></Slider>
            </Section>
            <Section $h={127}>
              <SectionTitle $mb={2}><Txt s={13}>{'事件列表过滤器 - 可见事件'}</Txt></SectionTitle>
              {filterLines.map(line => (
                <FilterLine key={line}><Txt s={N}>{line}</Txt></FilterLine>
              ))}
              <FilterButtons>
                <GreyButton><Txt s={14}>编辑过滤器</Txt></GreyButton>
                <GreyButton><Txt s={14}>全显/隐藏</Txt></GreyButton>
              </FilterButtons>
            </Section>
          </SidePanel>
        </Main>
        <NavBar $h={30}>
          <TimeLabel><Txt s={13.500}>{'  时间: 00:06:35.105'}</Txt></TimeLabel>
          <CircleBtn>
            <svg width="20" height="20" viewBox="0 0 20 20">
              <path d="M10 3a7 7 0 107 7" fill="none" stroke="#fff" strokeWidth="2" />
              <path d="M7 1v5l5-2z" fill="#fff" />
              <circle cx="10" cy="10" r="2" fill="#fff" />
            </svg>
          </CircleBtn>
          <PlayLabel><Txt s={13}>播放控制:</Txt></PlayLabel>
          <CircleBtn $w={31}><SkipBack /></CircleBtn>
          <CircleBtn $w={31}><PlayIcon /></CircleBtn>
          <CircleBtn $w={31}><SkipFwd /></CircleBtn>
          <Spacer />
          <Pill $on $w={82} $fs={13}>
            <svg width="22" height="22" viewBox="0 0 26 24">
              <path d="M2 4h22M2 8h22M2 12h22M2 16h10M2 20h8" stroke="#fff" strokeWidth="2" />
              <path d="M13 18c3-4 9-4 12 0-3 4-9 4-12 0z" fill="#fff" />
            </svg>
            <Txt s={13}>事件列表</Txt>
          </Pill>
          <Pill $w={102} $fs={15} $dim>
            <svg width="22" height="22" viewBox="0 0 22 22">
              <circle cx="11" cy="11" r="10" fill="#fff" />
              <path d="M11 5v6l3 3" stroke="#0f294e" strokeWidth="2" fill="none" />
            </svg>
            Realtime
          </Pill>
          <Pill $on $b $w={136} $fs={16.500}>
            <svg width="22" height="22" viewBox="0 0 24 24">
              <path d="M6 12c0-8 12-8 12 0l4 8H2z" fill="#fff" />
              <rect x="7" y="9" width="10" height="3" fill="#0b7bb0" />
            </svg>
            Simulation
          </Pill>
        </NavBar>
        <BottomPanel>
          <DevicePicker>
            <GreyBand $h={6} />
            <IconRow $m="2px 0 0">
              {pickTop.map((icon, i) => (
                <PickIcon key={i} $on={i === 0}>{icon}</PickIcon>
              ))}
            </IconRow>
            <PickerInput />
            <IconRow $m="2px 0">
              {pickBottom.map((icon, i) => (
                <PickIcon key={i} $on={i === 0}>{icon}</PickIcon>
              ))}
            </IconRow>
            <GreyBand $h={8} />
          </DevicePicker>
          <DeviceColumn>
            <TileStrip>
              {tiles.map(t => (
                <Tile key={t}>
                  <RouterIcon w={30} id={`t${t}`} />
                  <TileLabel $n={t.length}>{t}</TileLabel>
                </Tile>
              ))}
            </TileStrip>
            <TileScroll>
              <ScrollArrow><Chevron dir="left" /></ScrollArrow>
              <TileThumb />
              <Spacer />
              <ScrollArrow><Chevron dir="right" /></ScrollArrow>
            </TileScroll>
            <SelectedDevice><Txt s={13}>1841</Txt></SelectedDevice>
          </DeviceColumn>
          <CollapseStrip>
            <CollapseInner>
              <svg width="8" height="12" viewBox="0 0 8 12"><path d="M0 0l8 6-8 6z" fill="#555" /></svg>
            </CollapseInner>
          </CollapseStrip>
          <ScenarioPanel>
            <ScenarioTop>
              <InfoDot>i</InfoDot>
              <ScenarioSelect>
                <Txt s={13}>Scenario 0</Txt>
                <svg width="10" height="6" viewBox="0 0 10 6"><path d="M1 1l4 4 4-4" fill="none" stroke="#555" /></svg>
              </ScenarioSelect>
            </ScenarioTop>
            <ButtonRow>
              <GreyButton $w={91} $h={26}><Txt s={14}>新建</Txt></GreyButton>
              <GreyButton $w={91} $h={26}><Txt s={14}>删除</Txt></GreyButton>
            </ButtonRow>
            <ToggleWrap>
              <GreyButton $w={105} $h={26}><Txt s={13}>切换PDU列表窗口</Txt></GreyButton>
            </ToggleWrap>
          </ScenarioPanel>
          <PduTable>
            <PduHead>
              {pduHeads.map((h, i) => (
                <PduHeadCell key={h} $left={i === 0} $shift={h === '时间(秒)' || h === '编译'}>
                  <Txt s={13}>{h}</Txt>
                </PduHeadCell>
              ))}
            </PduHead>
            <PduRow>
              <PduCell $start><PduDot /></PduCell>
              <PduCell><Txt s={13}>正在进行</Txt></PduCell>
              <PduCell><Txt s={13}>...</Txt></PduCell>
              <PduCell><Txt s={13}>PC0</Txt></PduCell>
              <PduCell><Txt s={13}>ICMP</Txt></PduCell>
              <PduCell $start><PduSwatch /></PduCell>
              <PduCell><Txt s={13}>0.000</Txt></PduCell>
              <PduCell><Txt s={13}>N</Txt></PduCell>
              <PduCell><Txt s={13}>0</Txt></PduCell>
              <PduCell><Txt s={13}>(编辑)</Txt></PduCell>
              <PduCell />
              <PduCell $pr={40}><Txt s={13}>(删除)</Txt></PduCell>
            </PduRow>
          </PduTable>
        </BottomPanel>
        <Taskbar>
          <StartBtn><WinLogo /></StartBtn>
          <SearchBox>
            <svg width="22" height="24" viewBox="0 0 22 24">
              <circle cx="13" cy="9" r="7" fill="none" stroke="#222" strokeWidth="1.800" />
              <path d="M8 14L2 22" stroke="#222" strokeWidth="2" />
            </svg>
            搜索
            <SearchArt><SkylineArt /></SearchArt>
          </SearchBox>
          <TaskIcons>
            {taskIcons.map((t, i) => (
              <TaskSlot key={i} $on={t.on} $cur={t.cur}>{t.icon}</TaskSlot>
            ))}
          </TaskIcons>
          <Tray>
            <TrayItem $ml={0}>
              <svg width="17" height="10" viewBox="0 0 17 10"><path d="M1 9l7.500-7.500L16 9" fill="none" stroke="#111" strokeWidth="1.300" /></svg>
            </TrayItem>
            <TrayItem $ml={11}>
              <svg width="20" height="12" viewBox="0 0 20 12"><path d="M0 3h4v6H0z" fill="#111" /><rect x="5" y="1" width="15" height="10" fill="#111" /></svg>
            </TrayItem>
            <TrayItem $ml={10}>
              <svg width="14" height="18" viewBox="0 0 14 18"><path d="M.5.5h4v8h-4zM5 7h8v8H3M7 15v3M3 17.500h8" fill="none" stroke="#111" /></svg>
            </TrayItem>
            <TrayItem $ml={18}>
              <svg width="15" height="16" viewBox="0 0 15 16"><path d="M0 5h4l4-4v14l-4-4H0zM10 5a4 4 0 010 6M12 3a7 7 0 010 10" fill="#111" stroke="#111" strokeWidth=".6" /></svg>
            </TrayItem>
            <TrayItem $ml={13}><TrayText>中</TrayText></TrayItem>
            <TrayItem $ml={16}><OrangeBadge>中</OrangeBadge></TrayItem>
            <TrayItem $ml={37}><TrayText>17:10</TrayText></TrayItem>
            <TrayItem $ml={26}>
              <svg width="22" height="20" viewBox="0 0 22 20"><path d="M0 1h22v14h-8l-3 4-3-4H0z" fill="#111" /></svg>
            </TrayItem>
            <Watermark>CSDN @RunningBComeOn</Watermark>
          </Tray>
        </Taskbar>
        <Annotation width="1920" height="1080">
          <rect x="902" y="924.500" width="503" height="85" fill="none" stroke="#f00000" strokeWidth="3" />
          <path d="M970 637L1003 892" stroke="#f00000" strokeWidth="2.500" />
          <path d="M996 891l14 -2 -5 16z" fill="#f00000" />
        </Annotation>
      </Page>
    </>
  );
}
